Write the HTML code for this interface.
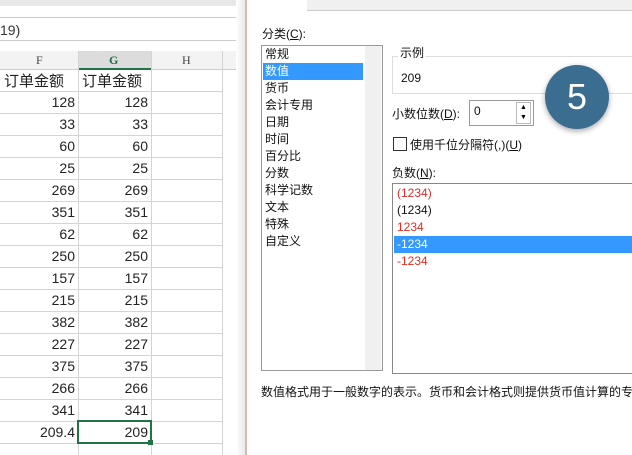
<!DOCTYPE html><html><head><meta charset="utf-8"><style>
body{margin:0;width:632px;height:455px;overflow:hidden;background:#fff;font-family:"Liberation Sans","Noto Sans CJK SC",sans-serif;position:relative}
.a{position:absolute}
.c{position:absolute;font-size:14px;color:#222;text-align:right}
.d{font-size:12px;color:#111}
</style></head><body>
<div class="a" style="left:0;top:0;width:245px;height:6px;background:#e8e8e8"></div>
<div class="a" style="left:0;top:17px;width:245px;height:1px;background:#ccc"></div>
<div class="a" style="left:0;top:40px;width:245px;height:1px;background:#ccc"></div>
<div class="a" style="left:0;top:22px;font-size:14px;color:#333">19)</div>
<div class="a" style="left:0;top:51px;width:245px;height:18px;background:#f3f3f3;border-bottom:1px solid #ccc"></div>
<div class="a" style="left:78px;top:51px;width:73px;height:17px;background:#dcdcdc;border-bottom:2px solid #217346"></div>
<div class="a" style="left:36px;top:53px;font-size:12px;color:#444;font-family:'Liberation Serif',serif">F</div>
<div class="a" style="left:109px;top:53px;font-size:12px;color:#217346;font-weight:bold;font-family:'Liberation Serif',serif">G</div>
<div class="a" style="left:182px;top:53px;font-size:12px;color:#444;font-family:'Liberation Serif',serif">H</div>
<svg class="a" style="left:0;top:51px" width="245" height="404">
<g stroke="#d4d4d4" stroke-width="1">
<line x1="78.5" y1="0" x2="78.5" y2="404"/><line x1="151.5" y1="0" x2="151.5" y2="404"/><line x1="222.5" y1="0" x2="222.5" y2="404"/>
<line x1="0" y1="40.5" x2="222" y2="40.5"/><line x1="0" y1="62.5" x2="222" y2="62.5"/><line x1="0" y1="84.5" x2="222" y2="84.5"/><line x1="0" y1="106.5" x2="222" y2="106.5"/><line x1="0" y1="128.5" x2="222" y2="128.5"/><line x1="0" y1="150.5" x2="222" y2="150.5"/><line x1="0" y1="172.5" x2="222" y2="172.5"/><line x1="0" y1="194.5" x2="222" y2="194.5"/><line x1="0" y1="216.5" x2="222" y2="216.5"/><line x1="0" y1="238.5" x2="222" y2="238.5"/><line x1="0" y1="260.5" x2="222" y2="260.5"/><line x1="0" y1="282.5" x2="222" y2="282.5"/><line x1="0" y1="304.5" x2="222" y2="304.5"/><line x1="0" y1="326.5" x2="222" y2="326.5"/><line x1="0" y1="348.5" x2="222" y2="348.5"/><line x1="0" y1="370.5" x2="222" y2="370.5"/><line x1="0" y1="392.5" x2="222" y2="392.5"/>
</g>
<rect x="78" y="370" width="73" height="22" fill="none" stroke="#217346" stroke-width="2"/>
<rect x="148" y="389" width="5" height="5" fill="#217346"/>
</svg>
<div class="a" style="left:4px;top:70px;font-size:15px;color:#222">订单金额</div>
<div class="a" style="left:82px;top:70px;font-size:15px;color:#222">订单金额</div>
<div class="a" style="left:0;top:91px;width:75px">
<div class="c" style="position:static;line-height:22px">128<br>33<br>60<br>25<br>269<br>351<br>62<br>250<br>157<br>215<br>382<br>227<br>375<br>266<br>341<br>209.4</div></div>
<div class="a" style="left:78px;top:91px;width:70px">
<div class="c" style="position:static;line-height:22px">128<br>33<br>60<br>25<br>269<br>351<br>62<br>250<br>157<br>215<br>382<br>227<br>375<br>266<br>341<br>209</div></div>
<div class="a" style="left:236px;top:0;width:10px;height:455px;background:linear-gradient(90deg,#fff,#e6e6e6)"></div>
<div class="a" style="left:245px;top:0;width:2px;height:455px;background:#d8b8b0"></div>
<div class="a" style="left:247px;top:0;width:385px;height:455px;background:#fff"></div>
<div class="a" style="left:247px;top:0;width:385px;height:10px;background:#f0f0f0;border-bottom:1px solid #ccc"></div>
<div class="a" style="left:247px;top:0;width:60px;height:11px;background:#fff"></div>
<div class="a d" style="left:262px;top:25px">分类(<u>C</u>):</div>
<div class="a" style="left:261px;top:45px;width:120px;height:324px;border:1px solid #999;background:#fff"></div>
<div class="a" style="left:365px;top:46px;width:16px;height:324px;background:#f0f0f0"></div>
<div class="a" style="left:263px;top:63px;width:100px;height:17px;background:#3399ff"></div>
<div class="a d" style="left:265px;top:46px;line-height:17px">常规<br><span style="color:#fff">数值</span><br>货币<br>会计专用<br>日期<br>时间<br>百分比<br>分数<br>科学记数<br>文本<br>特殊<br>自定义</div>
<div class="a" style="left:392px;top:56px;width:250px;height:36px;border:1px solid #ddd"></div>
<div class="a d" style="left:398px;top:44px;background:#fff;padding:0 2px">示例</div>
<div class="a d" style="left:401px;top:71px">209</div>
<div class="a d" style="left:392px;top:105px">小数位数(<u>D</u>):</div>
<div class="a" style="left:469px;top:100px;width:63px;height:24px;border:1px solid #999"></div>
<div class="a d" style="left:474px;top:104px">0</div>
<div class="a" style="left:516px;top:102px;width:13px;height:20px;border:1px solid #bbb;font-size:7px;text-align:center;line-height:10px">▲<br>▼</div>
<div class="a" style="left:393px;top:137px;width:12px;height:12px;border:1px solid #333"></div>
<div class="a d" style="left:410px;top:136px">使用千位分隔符(,)(<u>U</u>)</div>
<div class="a d" style="left:392px;top:164px">负数(<u>N</u>):</div>
<div class="a" style="left:392px;top:183px;width:250px;height:189px;border:1px solid #888"></div>
<div class="a" style="left:394px;top:236px;width:240px;height:17px;background:#3399ff"></div>
<div class="a d" style="left:397px;top:185px;line-height:17px"><span style="color:#d03030">(1234)</span><br>(1234)<br><span style="color:#e03020">1234</span><br><span style="color:#fff">-1234</span><br><span style="color:#e03020">-1234</span></div>
<div class="a d" style="left:261px;top:383px;white-space:nowrap">数值格式用于一般数字的表示。货币和会计格式则提供货币值计算的专</div>
<div class="a" style="left:545px;top:65px;width:64px;height:64px;border-radius:50%;background:#3b6d90;box-shadow:0 2px 6px rgba(0,0,0,.35);color:#fff;font-size:36px;text-align:center;line-height:64px">5</div>
</body></html>
